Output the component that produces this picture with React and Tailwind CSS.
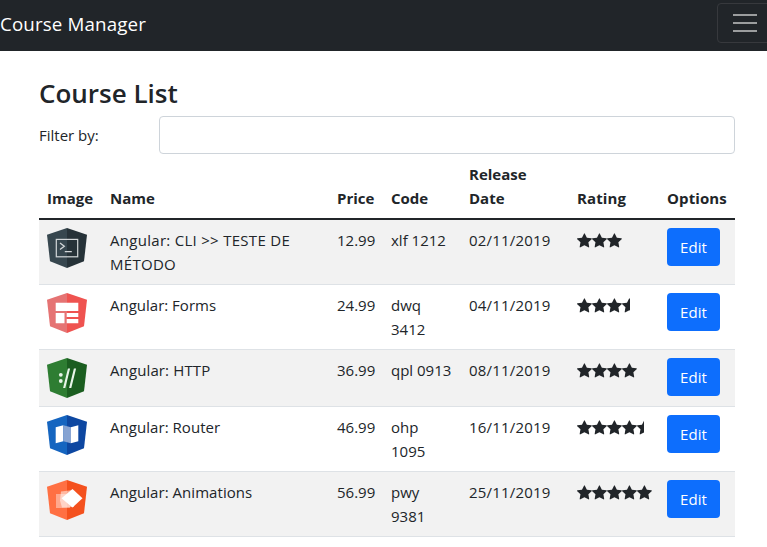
const courses = [
  { icon: 'cli', name: 'Angular: CLI >> TESTE DE MÉTODO', nameClass: 'tracking-[0.29px]', price: '12.99', code: 'xlf 1212', date: '02/11/2019', rating: 3 },
  { icon: 'forms', name: 'Angular: Forms', nameClass: 'tracking-normal', price: '24.99', code: 'dwq 3412', date: '04/11/2019', rating: 3.5 },
  { icon: 'http', name: 'Angular: HTTP', nameClass: 'tracking-[0.12px]', price: '36.99', code: 'qpl 0913', date: '08/11/2019', rating: 4 },
  { icon: 'router', name: 'Angular: Router', nameClass: 'tracking-[0.05px]', price: '46.99', code: 'ohp 1095', date: '16/11/2019', rating: 4.5 },
  { icon: 'animations', name: 'Angular: Animations', nameClass: 'tracking-[0.05px]', price: '56.99', code: 'pwy 9381', date: '25/11/2019', rating: 5 },
];

const shieldColors = {
  cli: ['#37474f', '#263238'],
  forms: ['#e57373', '#ef5350'],
  http: ['#2e7d32', '#1b5e20'],
  router: ['#1565c0', '#0d47a1'],
  animations: ['#ff7043', '#f4511e'],
};

const glyphs = {
  cli: (
    <g fill="none" stroke="#d3d7d9" strokeWidth="1.2">
      <rect x="9.3" y="11.4" width="21.4" height="17.4" />
      <path d="M13 15l4.300 3.300-4.300 3.300M17.800 23.700h7" strokeWidth="1.3" />
    </g>
  ),
  forms: (
    <path fill="#fff" d="M8.700 9.700h22.600v8.300H8.700zM8.700 20h8.800v10.200H8.700zM19.700 20h11.600v4H19.700zM19.700 26h11.600v4.200H19.700z" />
  ),
  http: (
    <g fill="#e8f5e9">
      <circle cx="13.8" cy="16.8" r="1.9" />
      <circle cx="13.8" cy="23" r="1.9" />
      <path d="M20.900 10.500h2.200L18.300 30h-2.200zM26.900 10.500h2.200L24.300 30h-2.200z" />
    </g>
  ),
  router: (
    <g>
      <path d="M8.700 12.300l7.600-2v15.900l-7.600 2z" fill="#fff" />
      <path d="M16.300 10.300l7.500 2v15.900l-7.500-2z" fill="#86a3d2" />
      <path d="M23.800 12.300l7.500-2v15.900l-7.500 2z" fill="#fff" />
    </g>
  ),
  animations: (
    <g fill="#fff">
      <path d="M9 14h14v14H9z" opacity=".4" />
      <path d="M14 11.500l12-1.500 1 17-12 .5-2-7z" opacity=".5" />
      <path d="M25.500 9L35.500 18.300 25.500 27.500 14.500 18.300z" />
    </g>
  ),
};

function Shield({ kind }) {
  const [left, right] = shieldColors[kind];
  return (
    <svg className="block h-10 w-10" viewBox="0 0 40 40">
      <path d="M20 0L0 6.700 3 33.300 20 40z" fill={left} />
      <path d="M20 0l20 6.700L37 33.300 20 40z" fill={right} />
      {glyphs[kind]}
    </svg>
  );
}

function Rating({ value }) {
  return (
    <div className="mt-[5px] ml-[0.4px] flex h-4 overflow-hidden text-[#212529]" style={{ width: (value * 74.5) / 5 }}>
      {[1, 2, 3, 4, 5].map((n) => (
        <svg key={n} className="h-4 w-[14.86px] shrink-0" viewBox="0 0 1664 1792" fill="currentColor">
          <path d="M1664 647q0 22-26 48l-363 354 86 500q1 7 1 20 0 21-10.500 35.500t-30.500 14.500q-19 0-40-12l-449-236-449 236q-22 12-40 12-21 0-31.500-14.500t-10.500-35.500q0-6 2-20l86-500-364-354q-25-27-25-48 0-37 56-46l502-73 225-455q19-41 49-41t49 41l225 455 502 73q56 9 56 46z" />
        </svg>
      ))}
    </div>
  );
}

export default function App() {
  return (
    <div className="h-[547px] w-full overflow-hidden bg-white font-['Open_Sans','Noto_Sans',sans-serif] text-[15px] leading-6 text-[#212529]">
      <nav className="flex h-[51px] items-start justify-between overflow-hidden bg-[#212529]">
        <a className="pt-[9px] text-[18.75px] leading-[30px] tracking-[0.13px] whitespace-nowrap text-white">Course Manager</a>
        <button className="mt-[3px] -mr-[6px] flex h-10 w-14 shrink-0 flex-col items-center justify-center gap-1.5 rounded border border-[#37393d]">
          <span className="h-0.5 w-6 bg-[#9b9d9e]" />
          <span className="h-0.5 w-6 bg-[#9b9d9e]" />
          <span className="h-0.5 w-6 bg-[#9b9d9e]" />
        </button>
      </nav>
      <main className="ml-[39px] w-[696px] pt-[25px]">
        <h2 className="h-10 text-[26px] leading-[34px] font-semibold">Course List</h2>
        <div className="flex h-[38px] items-center">
          <label className="w-[120px]">Filter by:</label>
          <input className="h-[38px] flex-1 rounded border border-[#ced4da] px-3 outline-none" />
        </div>
        <table className="mt-2 w-[696px] table-fixed border-separate border-spacing-0">
          <colgroup>
            <col className="w-[63px]" />
            <col className="w-[227px]" />
            <col className="w-[54px]" />
            <col className="w-[78px]" />
            <col className="w-[108px]" />
            <col className="w-[90px]" />
            <col className="w-[76px]" />
          </colgroup>
          <thead>
            <tr className="text-left align-bottom font-bold [&>th]:border-b-2 [&>th]:border-[#212529] [&>th]:pb-2 [&>th]:pl-2">
              <th>Image</th>
              <th>Name</th>
              <th>Price</th>
              <th>Code</th>
              <th>Release<br />Date</th>
              <th className="tracking-[0.1px]">Rating</th>
              <th className="tracking-[0.1px]">Options</th>
            </tr>
          </thead>
          <tbody>
            {courses.map((c) => (
              <tr key={c.icon} className="align-top odd:bg-[#f2f2f2] [&>td]:border-b [&>td]:border-[#dee2e6] [&>td]:py-2 [&>td]:pl-2">
                <td><Shield kind={c.icon} /></td>
                <td className={c.nameClass}><div className="w-[200px]">{c.name}</div></td>
                <td>{c.price}</td>
                <td className="pr-2">{c.code}</td>
                <td className="tracking-[0.18px]">{c.date}</td>
                <td><Rating value={c.rating} /></td>
                <td>
                  <button className="block h-[38px] w-[53px] rounded bg-[#0d6efd] tracking-[0.1px] text-white">Edit</button>
                </td>
              </tr>
            ))}
          </tbody>
        </table>
      </main>
    </div>
  );
}
